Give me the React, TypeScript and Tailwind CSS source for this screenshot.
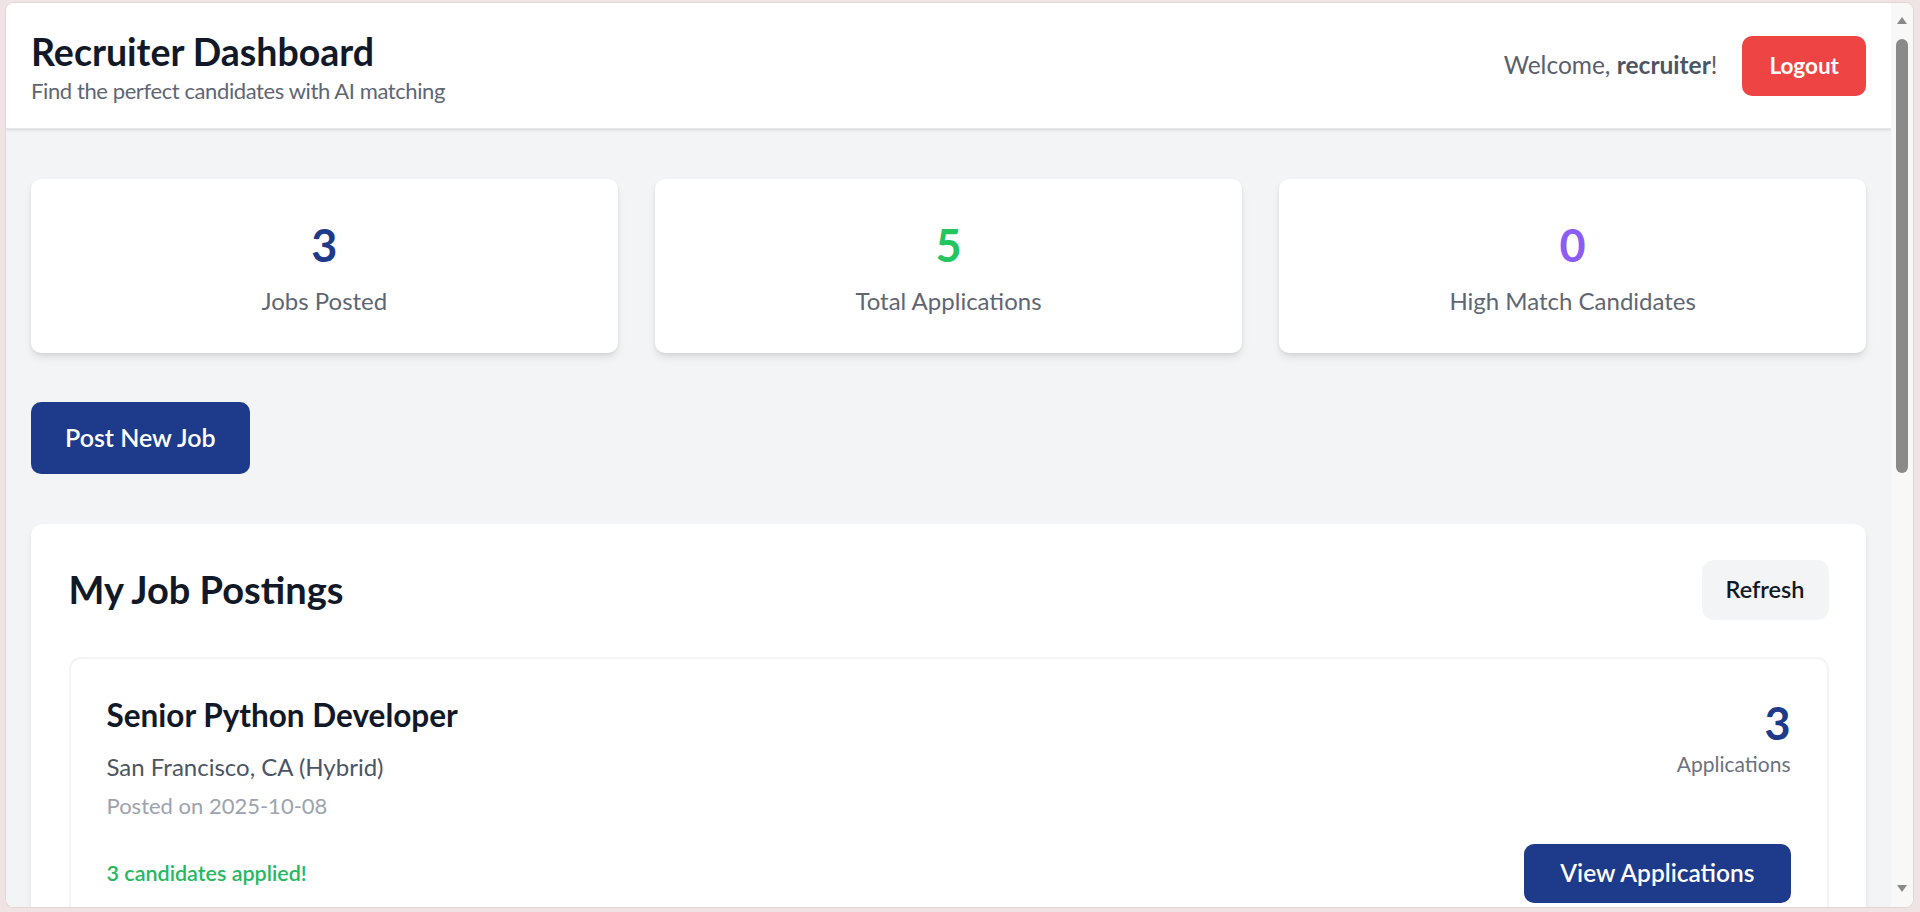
export default function App() {
  return (
    <div className="w-[1920px] h-[912px] overflow-hidden bg-[#efe4e3] pt-[3px] pl-[6px] pr-[7px] pb-[5px] font-['Lato',sans-serif]">
      <div className="flex h-full overflow-hidden rounded-[8px] bg-white shadow-[0_0_0_1px_#e4d4d3]">
        <div className="flex-1 overflow-hidden bg-[#f3f4f6]">
          <header className="flex h-[126px] items-center justify-between border-b border-[#e5e7eb] bg-white px-[25px] shadow-sm">
            <div className="pt-[6px]">
              <h1 className="text-[37.5px] leading-[45px] font-bold text-[#111827]">Recruiter Dashboard</h1>
              <p className="-mt-[1px] text-[22px] leading-[35px] tracking-[-0.4px] text-[#5f6673]">
                Find the perfect candidates with AI matching
              </p>
            </div>
            <div className="flex items-center gap-[25px]">
              <span className="text-[24.5px] text-[#59606c]">
                Welcome, <span className="font-bold text-[#4b5563]">recruiter</span>!
              </span>
              <button className="h-[60px] rounded-[10px] bg-[#ef4444] px-[27px] text-[22.5px] font-bold text-white">
                Logout
              </button>
            </div>
          </header>

          <main className="px-[25px] pt-[50px]">
            <div className="grid grid-cols-3 gap-[37.5px]">
              <StatCard value="3" label="Jobs Posted" color="text-[#1e3a8a]" />
              <StatCard value="5" label="Total Applications" color="text-[#22c55e]" />
              <StatCard value="0" label="High Match Candidates" color="text-[#8b5cf6]" />
            </div>

            <button className="mt-[49px] h-[72px] rounded-[10px] bg-[#1e3a8a] px-[34px] text-[25px] font-semibold text-white">
              Post New Job
            </button>

            <section className="mt-[50px] rounded-[12px] bg-white px-[37.5px] pt-[35.5px] pb-[37.5px] shadow-[0_5px_8px_-1px_rgba(0,0,0,0.08),0_2px_5px_-2px_rgba(0,0,0,0.08)]">
              <div className="flex h-[60px] items-center justify-between">
                <h2 className="text-[38px] font-bold text-[#111827]">My Job Postings</h2>
                <button className="h-[60px] rounded-[12px] bg-[#f3f4f6] px-[24px] text-[23.5px] font-semibold text-[#111827]">
                  Refresh
                </button>
              </div>

              <div className="mt-[37px] rounded-[12px] border-2 border-[#f3f4f6] p-[36px]">
                <div className="flex items-start justify-between">
                  <div>
                    <h3 className="text-[31.5px] leading-[40px] font-bold text-[#111827]">Senior Python Developer</h3>
                    <p className="mt-[14.5px] text-[24px] leading-[35px] text-[#4b5563]">San Francisco, CA (Hybrid)</p>
                    <p className="mt-[6.5px] text-[22px] leading-[30px] text-[#9ca3af]">Posted on 2025-10-08</p>
                  </div>
                  <div className="pt-[3.5px] text-right">
                    <div className="text-[45px] leading-[50px] font-bold text-[#1e3a8a]">3</div>
                    <div className="-mt-[2.5px] text-[21px] leading-[35px] text-[#6b7280]">Applications</div>
                  </div>
                </div>
                <div className="mt-[23px] flex items-center justify-between">
                  <span className="text-[21.5px] leading-[30px] font-semibold text-[#27b85f]">3 candidates applied!</span>
                  <button className="h-[59px] rounded-[10px] bg-[#1e3a8a] px-[36px] text-[24.5px] font-semibold text-white">
                    View Applications
                  </button>
                </div>
              </div>
            </section>
          </main>
        </div>

        <div className="flex w-[22px] flex-col items-center bg-[#f8f8f8]">
          <svg className="mt-[14px]" width="10" height="7" viewBox="0 0 10 7">
            <path d="M0 7 L5 0 L10 7 Z" fill="#8a8a8a" />
          </svg>
          <div className="mt-[15px] h-[434px] w-[12px] rounded-full bg-[#8a8a8a]" />
          <svg className="mt-auto mb-[15px]" width="10" height="7" viewBox="0 0 10 7">
            <path d="M0 0 L10 0 L5 7 Z" fill="#8a8a8a" />
          </svg>
        </div>
      </div>
    </div>
  )
}

function StatCard({ value, label, color }: { value: string; label: string; color: string }) {
  return (
    <div className="h-[174px] rounded-[10px] bg-white px-[38px] pt-[40.5px] text-center shadow-[0_5px_8px_-1px_rgba(0,0,0,0.1),0_2px_5px_-2px_rgba(0,0,0,0.1)]">
      <div className={`text-[45px] leading-[50px] font-bold ${color}`}>{value}</div>
      <div className="mt-[13px] text-[24px] leading-[35px] text-[#5f6673]">{label}</div>
    </div>
  )
}
